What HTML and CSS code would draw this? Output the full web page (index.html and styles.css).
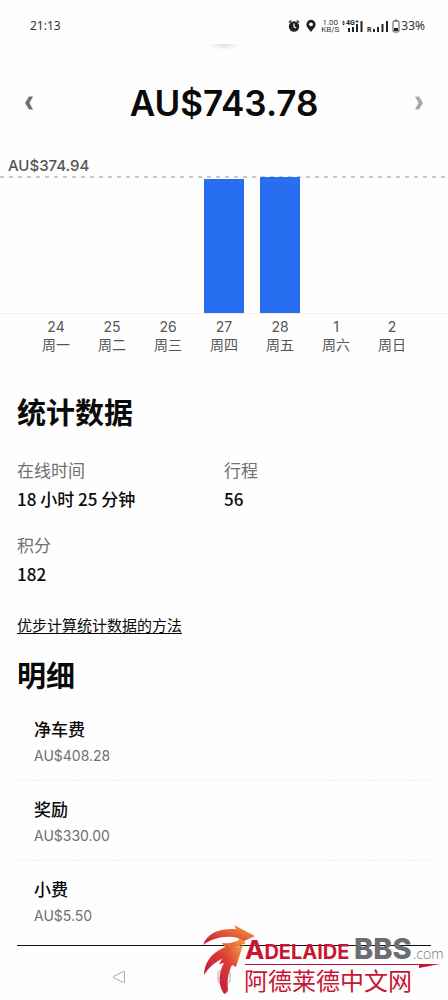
FILE: index.html
```html
<!DOCTYPE html>
<html lang="zh-CN">
<head>
<meta charset="utf-8">
<meta name="viewport" content="width=device-width, initial-scale=1">
<title>收入</title>
<link rel="stylesheet" href="styles.css">
</head>
<body>
<div class="app">
  <header class="status">
    <span class="clock">21:13</span>
    <div class="indicators">
      <svg class="alarm" width="12" height="14" viewBox="0 0 12 14"><circle cx="6" cy="7.5" r="5.2" fill="#222"/><path d="M1 3.4 3.2 1.4M11 3.4 8.8 1.4" stroke="#222" stroke-width="1.4"/><path d="M6 4.6V7.7L8 9" stroke="#fff" stroke-width="1.2" fill="none"/></svg>
      <svg class="pin" width="10" height="14" viewBox="0 0 10 14"><path d="M5 .8A4.6 4.6 0 0 0 .4 5.4C.4 8.3 3 9.8 5 13 7 9.800 9.600 8.300 9.600 5.400A4.600 4.600 0 0 0 5 .8Z" fill="#222"/><circle cx="5" cy="5.300" r="1.900" fill="#fff"/></svg>
      <div class="speed"><span>1.00</span><span>KB/S</span></div>
      <svg class="signal" width="22" height="14" viewBox="0 0 22 14"><path d="M0 3.500 1.500 1.500 3 3.500ZM0 4.500 1.500 6.500 3 4.500Z" fill="#222"/><text class="net" x="4" y="6">4G</text><path d="M13.500 2.500h3M15 1v3" stroke="#222" stroke-width=".8"/><path d="M6 9h2v4H6zM10 8h2v5h-2zM14 5h2v8h-2zM18.500 2h2v11h-2z" fill="#222"/></svg>
      <svg class="signal" width="22" height="14" viewBox="0 0 22 14"><text class="net" x="0" y="13">R</text><path d="M6 10h2v3H6zM10 8h2v5h-2zM14.500 5h2v8h-2zM19 2h2v11h-2z" fill="#222"/></svg>
      <svg class="battery" width="8" height="14" viewBox="0 0 8 14"><path d="M2.500.7h3v1.500h-3z" fill="#666"/><rect x="1" y="2" width="6" height="11" rx="1" fill="none" stroke="#555"/><path d="M2 9h4v3H2z" fill="#222"/></svg>
      <span class="percent">33%</span>
    </div>
  </header>
  <div class="handle"></div>

  <main>
    <section class="total">
      <button class="step" type="button" aria-label="上一周"><svg width="10" height="14" viewBox="0 0 10 14"><path d="M5 .5H9L5.500 7 9 13.500H5L1 7Z" fill="#707070"/></svg></button>
      <h1>AU$743.78</h1>
      <button class="step" type="button" aria-label="下一周"><svg width="10" height="14" viewBox="0 0 10 14"><path d="M5 .5H1L4.500 7 1 13.500H5L9 7Z" fill="#a8a8a8"/></svg></button>
    </section>

    <section class="chart" aria-label="每日收入">
      <p class="peak">AU$374.94</p>
      <div class="plot">
        <svg class="guide" width="100%" height="2"><line x1="0" y1="1" x2="100%" y2="1" stroke="#cbc8ca" stroke-width="2" stroke-dasharray="4 5"/></svg>
        <div class="bars">
          <i></i><i></i><i></i>
          <i class="bar" style="height:98.5%"></i>
          <i class="bar" style="height:100%"></i>
          <i></i><i></i>
        </div>
      </div>
      <ol class="days">
        <li><span>24</span><span>周一</span></li>
        <li><span>25</span><span>周二</span></li>
        <li><span>26</span><span>周三</span></li>
        <li><span>27</span><span>周四</span></li>
        <li><span>28</span><span>周五</span></li>
        <li><span>1</span><span>周六</span></li>
        <li><span>2</span><span>周日</span></li>
      </ol>
    </section>

    <section class="stats">
      <h2>统计数据</h2>
      <dl class="figures">
        <div><dt>在线时间</dt><dd>18 小时 25 分钟</dd></div>
        <div><dt>行程</dt><dd>56</dd></div>
        <div><dt>积分</dt><dd>182</dd></div>
      </dl>
      <a class="method" href="#method">优步计算统计数据的方法</a>
    </section>

    <section class="details">
      <h2>明细</h2>
      <ul class="items">
        <li><span class="name">净车费</span><span class="amount">AU$408.28</span></li>
        <li><span class="name">奖励</span><span class="amount">AU$330.00</span></li>
        <li><span class="name">小费</span><span class="amount">AU$5.50</span></li>
      </ul>
    </section>
  </main>

  <nav class="system">
    <button type="button" aria-label="返回"><svg width="14" height="14" viewBox="0 0 14 14"><path d="M12.500 2V12Q12.500 13 11.500 12.500L1.800 7.700Q.8 7 1.800 6.300L11.500 1.500Q12.500 1 12.500 2Z" fill="none" stroke="#aaa"/></svg></button>
    <button type="button" aria-label="主屏幕"><svg width="14" height="14" viewBox="0 0 14 14"><rect x="1" y="1" width="12" height="12" rx="2" fill="none" stroke="#aaa"/></svg></button>
    <span></span>
  </nav>

  <svg class="watermark" width="248" height="80" viewBox="0 0 248 80" role="img" aria-label="AdelaideBBS.com 阿德莱德中文网">
    <defs>
      <linearGradient id="g1" x1="0" y1="1" x2="1" y2="0"><stop offset="0" stop-color="#bd1644"/><stop offset=".5" stop-color="#e25434"/><stop offset="1" stop-color="#f6ad45"/></linearGradient>
      <linearGradient id="g2" x1="0" y1="1" x2="1" y2="0"><stop offset="0" stop-color="#c41740"/><stop offset=".5" stop-color="#dc3d37"/><stop offset="1" stop-color="#f4a040"/></linearGradient>
    </defs>
    <path d="M3 25C7 13 19 8 36 9L34 5 55 16 42 22 38 18C25 15 13 18 3 25Z" fill="url(#g1)"/>
    <path d="M4 55C4 43 11 33 25 27L22 23Q33 24 41 19L46 23Q32 28 24 38C15 42 9 47 4 55Z" fill="url(#g2)"/>
    <path d="M43 25 36 47 32 45C28 53 27 62 28 69Q28 73 24 74C18 65 18 54 24 43L19 44Q26 30 43 25Z" fill="url(#g2)"/>
    <text class="mark-red" x="45" y="39"><tspan class="mark-cap">A</tspan><tspan class="mark-small">DELAIDE</tspan></text>
    <text class="mark-gray" x="154" y="39">BBS</text>
    <text class="mark-com" x="213" y="39">.com</text>
    <path d="M45 44H240L219 48V45H45Z" fill="#c91432"/>
    <text class="mark-zh" x="44" y="70">阿德莱德中文网</text>
  </svg>
</div>
</body>
</html>
```
FILE: styles.css
```css
* { box-sizing: border-box; }
body, h1, h2, p, dl, dd, ol, ul { margin: 0; padding: 0; }
body {
  background: #fefefe;
  color: #0a0a0a;
  font-family: Inter, "Noto Sans CJK SC", sans-serif;
}
ol, ul { list-style: none; }
button { padding: 0; border: 0; background: none; display: grid; place-items: center; }
svg { display: block; }

.app { position: relative; min-height: 100vh; display: flex; flex-direction: column; }

.status {
  display: flex;
  justify-content: space-between;
  align-items: center;
  height: 44px;
  padding: 8px 23px 0 30px;
  color: #333;
}
.clock, .percent { font-family: "Noto Sans", sans-serif; font-size: 12px; line-height: 16px; }
.indicators { display: flex; align-items: center; gap: 3px; }
.alarm { margin-right: 3px; }
.speed { display: flex; flex-direction: column; align-items: center; margin-left: 2px; font-family: Roboto, sans-serif; font-size: 8px; line-height: 7px; }
.net { font: 700 7px Roboto, sans-serif; fill: #222; }
.percent { margin-left: -2px; }
.handle {
  align-self: center;
  width: 32px;
  height: 6px;
  background: radial-gradient(ellipse at top, #ddd, #fefefe 70%);
}

.total { display: flex; align-items: center; justify-content: space-between; padding: 32px 24px 0; }
.total h1 { font-size: 35px; line-height: 42px; font-weight: 600; }
.step { width: 10px; height: 42px; }

.chart { padding-top: 32px; color: #555; }
.peak { padding-left: 8px; font-size: 15px; line-height: 20px; font-weight: 500; }
.plot { border-bottom: 1px solid #f1f1f1; }
.bars {
  display: grid;
  grid-template-columns: repeat(7, 1fr);
  justify-items: center;
  align-items: end;
  height: 136px;
  padding: 0 28px;
}
.guide { margin-bottom: -1px; }
.bar { position: relative; width: 40px; background: #286ef0; }
.days { display: grid; grid-template-columns: repeat(7, 1fr); padding: 4px 28px 0; text-align: center; }
.days li { display: flex; flex-direction: column; font-size: 14px; line-height: 18px; }

h2 { font-size: 29px; line-height: 40px; font-weight: 700; }
.stats { padding: 40px 17px 0; }
.figures { display: grid; grid-template-columns: 1fr 1fr; row-gap: 19px; padding-top: 22px; }
.figures dt { color: #707070; font-size: 17px; line-height: 30px; }
.figures dd { font-family: "Noto Sans CJK SC", sans-serif; font-size: 17px; line-height: 26px; font-weight: 500; }
.method { display: inline-block; margin-top: 27px; color: #0a0a0a; font-size: 15px; line-height: 24px; text-underline-offset: 2px; }

.details { padding: 19px 17px 0; }
.items { padding-top: 14px; border-bottom: 1px solid #111; }
.items li { display: flex; flex-direction: column; height: 80px; padding: 16px 17px 0; border-bottom: 1px dashed #eee; }
.items li:first-child { height: 70px; padding-top: 6px; }
.items li:last-child { height: 84px; border-bottom: 0; }
.name { font-size: 17px; line-height: 26px; font-weight: 500; }
.amount { color: #707070; font-size: 14px; line-height: 26px; }

.system { display: grid; grid-template-columns: repeat(3, 1fr); padding: 0 66px; margin-top: 24px; justify-items: center; }

.watermark { position: absolute; right: 0; bottom: 0; }
.mark-red { fill: #c91432; font-family: Inter, sans-serif; font-weight: 700; }
.mark-cap { font-size: 26px; }
.mark-small { font-size: 20px; }
.mark-gray { fill: #6d6e70; font: 800 29px Inter, sans-serif; }
.mark-com { fill: #777; font: 300 14px "Open Sans", sans-serif; }
.mark-zh { fill: #c91432; font: 400 24px "Noto Sans CJK SC", sans-serif; }
```
